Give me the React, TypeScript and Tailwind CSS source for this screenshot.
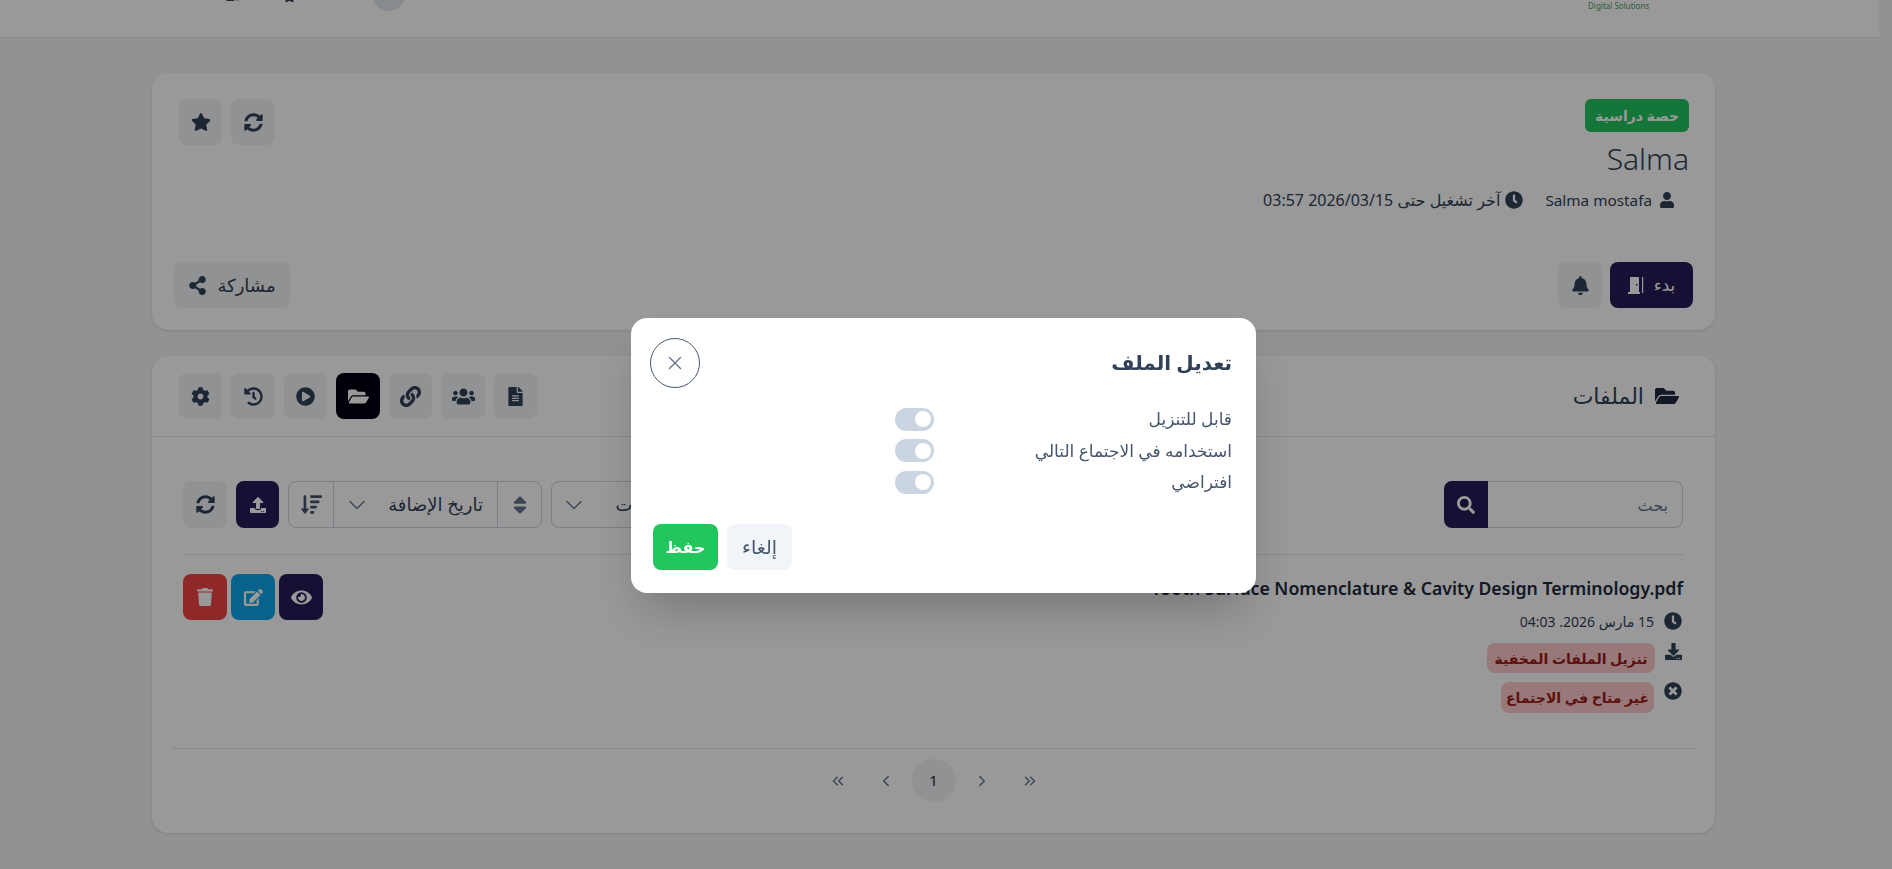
import React from "react";
import {
  FaBell, FaClock, FaCog, FaDownload, FaEdit, FaEye, FaFileAlt, FaFolderOpen, FaHistory, FaLink,
  FaPlayCircle, FaSearch, FaShareAlt, FaSort, FaSortAmountDown, FaStar, FaSyncAlt, FaTimesCircle, FaTrash,
  FaUpload, FaUser, FaUsers, FaUserFriends,
} from "react-icons/fa";
import { ChevronDown, ChevronLeft, ChevronRight, ChevronsLeft, ChevronsRight, X } from "lucide-react";

const tabs = [
  { icon: FaFileAlt, width: "w-[43px]", size: 19 },
  { icon: FaUsers, width: "w-[44px]", size: 23 },
  { icon: FaLink, width: "w-[43px]", size: 21 },
  { icon: FaFolderOpen, width: "w-[44px]", size: 21, active: true },
  { icon: FaPlayCircle, width: "w-[43px]", size: 19 },
  { icon: FaHistory, width: "w-[44px]", size: 19 },
  { icon: FaCog, width: "w-[43px]", size: 19 },
];

const options = ["قابل للتنزيل", "استخدامه في الاجتماع التالي", "افتراضي"];

const IconButton: React.FC<{ children: React.ReactNode; className?: string }> = ({ children, className }) => (
  <button className={`flex h-[46px] items-center justify-center rounded-lg ${className ?? "w-[44px] bg-[#f1f3f5] text-slate-700"}`}>
    {children}
  </button>
);

const Toggle = () => (
  <div className="flex h-[23px] w-[39px] items-center rounded-full bg-[#cbd5e1] pr-[3px]">
    <span className="h-[16px] w-[16px] rounded-full bg-white" />
  </div>
);

// narrow door, the icon package only has wide ones
const DoorIcon = () => (
  <svg viewBox="0 0 16 18" width={16} height={18} fill="currentColor">
    <path fillRule="evenodd" d="M2 1h9v15H2zM8 8v1.5h1.5V8z" />
    <path d="M14 1h1.2v16H14z" />
    <path d="M0 16h12v2H0z" />
  </svg>
);

export default function App() {
  return (
    <div dir="rtl" className="h-[869px] overflow-hidden bg-[#f1f3f5] font-['Noto_Sans','DejaVu_Sans',sans-serif] text-slate-700">
      <header dir="ltr" className="mr-[13px] flex h-[38px] items-start overflow-hidden border-b border-[#e2e6ea] bg-white">
        <div className="flex h-[11px] w-full items-end pl-[226px] text-slate-700">
          <FaUserFriends className="mb-[8px] shrink-0" size={14} />
          <FaStar className="mb-[8px] ml-[43px] shrink-0" size={13} />
          <span className="ml-[76px] h-[33px] w-[33px] shrink-0 rounded-full bg-slate-200" />
          <span className="ml-[1183px] whitespace-nowrap text-[8px] leading-[10px] text-[#4f9a62]">Digital Solutions</span>
        </div>
      </header>

      <main className="flex flex-col gap-[26px] pl-[152px] pr-[177px] pt-[35px]">
        <section className="flex h-[257px] flex-col justify-between rounded-2xl bg-white px-[22px] pb-[22px] pt-[26px] shadow">
          <div className="flex justify-between pl-[5px] pr-[4px]">
            <div className="flex flex-col items-start">
              <span className="flex h-[33px] w-[104px] items-center justify-center rounded-md bg-[#22c55e] text-[14px] font-semibold text-white">حصة دراسية</span>
              <h1 className="mt-[6px] text-[30px] font-light leading-[42px] text-slate-700">Salma</h1>
              <div className="mt-[8px] flex h-[24px] items-center pr-[14px] text-[15.3px]">
                <FaUser size={16} className="text-slate-700" />
                <span className="mr-[7px]">Salma mostafa</span>
                <FaClock size={18} className="mr-[22px] text-slate-700" />
                <span className="mr-[5px] text-[16px]">آخر تشغيل حتى 2026/03/15 03:57</span>
              </div>
            </div>
            <div className="flex gap-[9px]">
              <IconButton><FaSyncAlt size={19} /></IconButton>
              <IconButton className="w-[43px] bg-[#f1f3f5] text-slate-700"><FaStar size={20} /></IconButton>
            </div>
          </div>
          <div className="flex justify-between">
            <div className="flex gap-[8px]">
              <button className="flex h-[46px] w-[83px] items-center justify-center gap-[10px] rounded-lg bg-[#281b57] text-[17px] text-white">
                بدء
                <DoorIcon />
              </button>
              <IconButton><FaBell size={19} /></IconButton>
            </div>
            <button className="flex h-[46px] w-[116px] items-center justify-center gap-[10px] rounded-lg bg-[#f1f3f5] text-[18px]">
              مشاركة
              <FaShareAlt size={19} />
            </button>
          </div>
        </section>

        <section className="h-[477px] rounded-2xl bg-white shadow">
          <div className="flex h-[81px] items-center justify-between border-b border-[#e2e6ea] pl-[27px] pr-[36px]">
            <div className="flex items-center gap-[11px]">
              <FaFolderOpen size={24} className="text-slate-800" />
              <span className="-mt-[2px] text-[22px]">الملفات</span>
            </div>
            <div className="flex gap-[9px]">
              {tabs.map(({ icon: Icon, width, size, active }, i) => (
                <IconButton key={i} className={`${width} ${active ? "bg-[#000010] text-white" : "bg-[#f1f3f5] text-slate-700"}`}>
                  <Icon size={size} />
                </IconButton>
              ))}
            </div>
          </div>

          <div className="h-[311px] pl-[31px] pr-[32px] pt-[44px]">
            <div className="flex h-[74px] items-start justify-between border-b border-[#e2e6ea]">
              <div className="flex h-[47px] w-[239px]">
                <div className="flex flex-1 items-center rounded-r-lg border border-l-0 border-slate-300 pr-[14px] text-[16px] text-slate-500">بحث</div>
                <button className="flex w-[44px] items-center justify-center rounded-l-lg bg-[#281b57] text-white">
                  <FaSearch size={18} />
                </button>
              </div>
              <div className="flex h-[47px] gap-[9px]">
                <div className="flex w-[240px] items-center justify-between rounded-lg border border-slate-300 pl-[8px] pr-[116px] text-[18px]">
                  الملفات
                  <ChevronDown size={28} strokeWidth={1.2} className="text-slate-500" />
                </div>
                <div className="flex w-[254px] items-stretch rounded-lg border border-slate-300">
                  <div className="flex w-[44px] items-center justify-center border-l border-slate-300 text-slate-500">
                    <FaSort size={22} />
                  </div>
                  <div className="flex flex-1 items-center justify-between border-l border-slate-300 pl-[9px] pr-[14px] text-[18px]">
                    تاريخ الإضافة
                    <ChevronDown size={28} strokeWidth={1.2} className="text-slate-500" />
                  </div>
                  <div className="flex w-[44px] items-center justify-center text-slate-600">
                    <FaSortAmountDown size={21} />
                  </div>
                </div>
                <button className="flex w-[43px] items-center justify-center rounded-lg bg-[#281b57] text-white">
                  <FaUpload size={16} />
                </button>
                <button className="flex w-[44px] items-center justify-center rounded-lg bg-[#f1f3f5]">
                  <FaSyncAlt size={19} />
                </button>
              </div>
            </div>

            <div className="mt-[19px] flex items-start justify-between">
              <div className="flex flex-col items-start">
                <div dir="ltr" className="text-[17.7px] font-semibold leading-[28px] text-slate-800">Tooth Surface Nomenclature &amp; Cavity Design Terminology.pdf</div>
                <div className="mt-[9px] flex h-[20px] items-center gap-[10px] pr-[1px] text-[14px]">
                  <FaClock size={18} />
                  <span>15 مارس 2026. 04:03</span>
                </div>
                <div className="mt-[12px] flex items-start gap-[10px] pr-[1px]">
                  <FaDownload size={17} />
                  <span className="flex h-[30px] w-[168px] items-center justify-center rounded-lg bg-[#fecaca] text-[14px] font-semibold text-[#991b1b]">تنزيل الملفات المخفية</span>
                </div>
                <div className="mt-[9px] flex items-start gap-[10px] pr-[1px]">
                  <FaTimesCircle size={18} />
                  <span className="flex h-[31px] w-[153px] items-center justify-center rounded-lg bg-[#fecaca] text-[14px] font-semibold text-[#991b1b]">غير متاح في الاجتماع</span>
                </div>
              </div>
              <div className="flex gap-[4px]">
                <IconButton className="w-[44px] bg-[#281b57] text-white"><FaEye size={21} /></IconButton>
                <IconButton className="w-[44px] bg-[#0ea5e9] text-white"><FaEdit size={19} /></IconButton>
                <IconButton className="w-[44px] bg-[#ef4444] text-white"><FaTrash size={18} /></IconButton>
              </div>
            </div>
          </div>

          <nav dir="ltr" className="mx-[21px] flex items-start justify-center border-t border-[#e2e6ea] pt-[10px] text-slate-500">
            <div className="flex h-[43px] items-center">
              <ChevronsLeft size={18} />
              <ChevronLeft size={18} className="ml-[30px]" />
              <span className="ml-[17px] flex h-[43px] w-[44px] items-center justify-center rounded-full bg-[#f1f3f5] text-[15px] text-slate-800">1</span>
              <ChevronRight size={18} className="ml-[17px]" />
              <ChevronsRight size={18} className="ml-[30px]" />
            </div>
          </nav>
        </section>
      </main>

      <div className="fixed inset-0 flex items-start justify-center bg-black/40 pr-[5px] pt-[318px]">
        <div className="flex h-[275px] w-[625px] flex-col rounded-2xl bg-white pb-[23px] pl-[19px] pr-[24px] pt-[20px] shadow-2xl">
          <div className="flex items-center justify-between">
            <h2 className="text-[20px] font-bold text-slate-700">تعديل الملف</h2>
            <button className="flex h-[50px] w-[50px] items-center justify-center rounded-full border border-slate-600 text-slate-500">
              <X size={22} strokeWidth={1.5} />
            </button>
          </div>
          <div className="mt-[19px] flex flex-col gap-[7.5px]">
            {options.map((label) => (
              <div key={label} className="flex h-[24px] items-center text-[17px] text-slate-600">
                <span className="w-[298px] whitespace-nowrap">{label}</span>
                <Toggle />
              </div>
            ))}
          </div>
          <div className="mt-auto flex justify-end gap-[9px] pl-[3px]">
            <button className="h-[46px] w-[65px] rounded-lg bg-[#f1f5f9] text-[19px] text-slate-600">إلغاء</button>
            <button className="h-[46px] w-[65px] rounded-lg bg-[#22c55e] text-[16px] font-semibold text-white">حفظ</button>
          </div>
        </div>
      </div>
    </div>
  );
}
